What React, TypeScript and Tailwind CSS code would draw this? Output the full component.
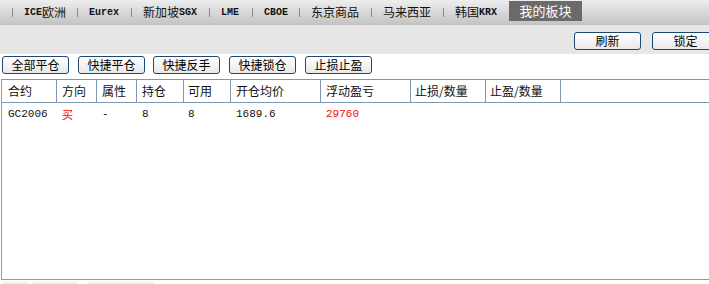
const cjk = "font-['Noto_Sans_CJK_SC','Noto_Sans',sans-serif]"
const mono = "font-['Liberation_Mono','Noto_Sans_CJK_SC',monospace]"

type Tab = { latin?: string; cjk?: string; latinFirst?: boolean; w: number }

const tabs: Tab[] = [
  { latin: "ICE", cjk: "欧洲", latinFirst: true, w: 65 },
  { latin: "Eurex", w: 54 },
  { cjk: "新加坡", latin: "SGX", w: 78 },
  { latin: "LME", w: 43 },
  { latin: "CBOE", w: 47 },
  { cjk: "东京商品", w: 72 },
  { cjk: "马来西亚", w: 72 },
  { cjk: "韩国", latin: "KRX", w: 66 },
]

const columns = [
  { label: "合约", w: "w-[55px]", pl: "pl-[6px]" },
  { label: "方向", w: "w-[40px]", pl: "pl-[5px]" },
  { label: "属性", w: "w-[40px]", pl: "pl-[5px]" },
  { label: "持仓", w: "w-[47px]", pl: "pl-[5px]" },
  { label: "可用", w: "w-[47px]", pl: "pl-[4px]" },
  { label: "开仓均价", w: "w-[90px]", pl: "pl-[5px]" },
  { label: "浮动盈亏", w: "w-[90px]", pl: "pl-[5px]" },
  { label: "止损/数量", w: "w-[75px]", pl: "pl-[4px]" },
  { label: "止盈/数量", w: "w-[75px]", pl: "pl-[4px]" },
]

const row = ["GC2006", "买", "-", "8", "8", "1689.6", "29760", "", ""]

function Btn({ label, className = "" }: { label: string; className?: string }) {
  return (
    <button
      className={`h-[18px] w-[67px] shrink-0 rounded-[3px] border border-[#1d4873] bg-gradient-to-b from-white to-[#e9e9e9] text-[12px] leading-[16px] text-black ${cjk} ${className}`}
    >
      {label}
    </button>
  )
}

export default function App() {
  return (
    <div className="w-[709px] h-[284px] overflow-hidden bg-white text-[#111]">
      {/* top market tabs */}
      <div className="h-[25px] flex items-start pl-[12px] bg-gradient-to-b from-[#eeeeee] to-[#c3c3c3]">
        {tabs.map((t, i) => (
          <div key={i} className="h-[24px] flex items-center shrink-0" style={{ width: t.w }}>
            <div className="w-px h-[9px] bg-[#8c8c8c] shrink-0" />
            <span className="ml-[11px] flex items-center whitespace-nowrap">
              {t.latinFirst ? (
                <>
                  <span className={`${mono} text-[10px] font-bold`}>{t.latin}</span>
                  <span className={`${cjk} text-[12px]`}>{t.cjk}</span>
                </>
              ) : (
                <>
                  {t.cjk && <span className={`${cjk} text-[12px]`}>{t.cjk}</span>}
                  {t.latin && <span className={`${mono} text-[10px] font-bold`}>{t.latin}</span>}
                </>
              )}
            </span>
          </div>
        ))}
        <div className={`mt-px h-[20px] w-[73px] shrink-0 bg-[#6a6a6a] text-white text-[13px] leading-[20px] text-center ${cjk}`}>
          我的板块
        </div>
      </div>

      {/* right tool buttons */}
      <div className="h-[29px] bg-[#e7e7e7] flex items-start pt-[7px] pl-[574px] gap-[11px]">
        <Btn label="刷新" />
        <Btn label="锁定" />
      </div>

      {/* quick actions */}
      <div className="h-[25px] flex items-start pt-[2px] pl-[2px]">
        <Btn label="全部平仓" />
        <Btn label="快捷平仓" className="ml-[9px]" />
        <Btn label="快捷反手" className="ml-[8px]" />
        <Btn label="快捷锁仓" className="ml-[9px]" />
        <Btn label="止损止盈" className="ml-[9px]" />
      </div>

      {/* positions table */}
      <div className="ml-px h-[201px] border-l border-b border-[#8b9aa8] flex flex-col">
        <div className="h-[24px] border-y border-[#7d98b3] flex">
          {columns.map((c) => (
            <div
              key={c.label}
              className={`${c.w} ${c.pl} shrink-0 border-r border-[#7d98b3] text-[12px] leading-[22px] ${cjk}`}
            >
              {c.label}
            </div>
          ))}
        </div>
        <div className="h-[22px] flex items-center">
          {columns.map((c, i) => (
            <div
              key={c.label}
              className={`${c.w} ${c.pl} shrink-0 text-[11px] ${i === 1 ? cjk : mono} ${
                i === 1 || i === 6 ? "text-[#ff0000]" : "text-[#111]"
              }`}
            >
              {row[i]}
            </div>
          ))}
        </div>
      </div>

      {/* bottom strip */}
      <div className="flex gap-[4px] pt-[2px] pl-[2px]">
        <div className="h-[3px] w-[26px] bg-[#efefef]" />
        <div className="h-[3px] w-[46px] bg-[#efefef]" />
        <div className="ml-[6px] h-[3px] w-[66px] bg-[#efefef]" />
      </div>
    </div>
  )
}
